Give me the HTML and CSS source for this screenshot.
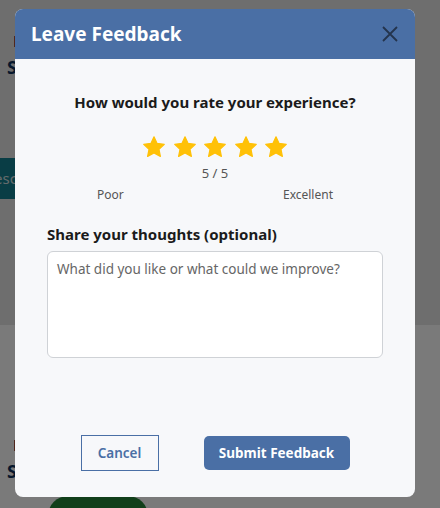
FILE: index.html
```html
<!DOCTYPE html>
<html>
<head>
<meta charset="utf-8">
<link rel="stylesheet" href="styles.css">
</head>
<body>
<div class="page">
  <div class="top-band">
    <div class="card-stub">
      <span class="mark"></span>
      <span class="stub-letter">S</span>
    </div>
    <div class="teal-bar">esc</div>
  </div>
  <div class="bottom-band">
    <div class="card-stub lower">
      <span class="mark"></span>
      <span class="stub-letter">S</span>
    </div>
    <div class="green-btn"></div>
  </div>
</div>
<div class="overlay">
  <div class="modal">
    <div class="modal-header">
      <h2 class="modal-title">Leave Feedback</h2>
      <svg class="close" width="16" height="16" viewBox="0 0 16 16"><path d="M1 1 L15 15 M15 1 L1 15" stroke="#24344d" stroke-width="1.8" fill="none"/></svg>
    </div>
    <div class="modal-body">
      <p class="question">How would you rate your experience?</p>
      <div class="stars">
        <svg class="star" viewBox="0 0 24 24"><path d="M12 1.8l3.1 6.6 7.2.9-5.3 5 1.4 7.1L12 17.9l-6.4 3.5 1.4-7.1-5.3-5 7.2-.9z" fill="#ffc107" stroke="#ffc107" stroke-width="1.2" stroke-linejoin="round"/></svg>
        <svg class="star" viewBox="0 0 24 24"><path d="M12 1.8l3.1 6.6 7.2.9-5.3 5 1.4 7.1L12 17.9l-6.4 3.5 1.4-7.1-5.3-5 7.2-.9z" fill="#ffc107" stroke="#ffc107" stroke-width="1.2" stroke-linejoin="round"/></svg>
        <svg class="star" viewBox="0 0 24 24"><path d="M12 1.8l3.1 6.6 7.2.9-5.3 5 1.4 7.1L12 17.9l-6.4 3.5 1.4-7.1-5.3-5 7.2-.9z" fill="#ffc107" stroke="#ffc107" stroke-width="1.2" stroke-linejoin="round"/></svg>
        <svg class="star" viewBox="0 0 24 24"><path d="M12 1.8l3.1 6.6 7.2.9-5.3 5 1.4 7.1L12 17.9l-6.4 3.5 1.4-7.1-5.3-5 7.2-.9z" fill="#ffc107" stroke="#ffc107" stroke-width="1.2" stroke-linejoin="round"/></svg>
        <svg class="star" viewBox="0 0 24 24"><path d="M12 1.8l3.1 6.6 7.2.9-5.3 5 1.4 7.1L12 17.9l-6.4 3.5 1.4-7.1-5.3-5 7.2-.9z" fill="#ffc107" stroke="#ffc107" stroke-width="1.2" stroke-linejoin="round"/></svg>
      </div>
      <div class="score">5 / 5</div>
      <div class="scale"><span>Poor</span><span>Excellent</span></div>
      <label class="thoughts-label" for="thoughts">Share your thoughts (optional)</label>
      <textarea id="thoughts" class="thoughts" placeholder="What did you like or what could we improve?"></textarea>
      <div class="actions">
        <button class="btn-cancel">Cancel</button>
        <button class="btn-submit">Submit Feedback</button>
      </div>
    </div>
  </div>
</div>
</body>
</html>
```

FILE: styles.css
```css
* { box-sizing: border-box; }
html, body { margin: 0; padding: 0; }
body {
  width: 440px;
  height: 508px;
  overflow: hidden;
  font-family: "Noto Sans", "Open Sans", sans-serif;
  background: #f2f2f2;
  position: relative;
}
.page {
  display: flex;
  flex-direction: column;
  height: 508px;
  overflow: hidden;
}
.top-band {
  height: 325px;
  flex-shrink: 0;
  background: #dcdcdc;
  padding-top: 36px;
  display: flex;
  flex-direction: column;
}
.bottom-band {
  flex: 1 0 auto;
  background: #f4f4f4;
  padding-top: 115px;
  display: flex;
  flex-direction: column;
}
.card-stub {
  display: flex;
  flex-direction: column;
  padding-left: 7px;
  gap: 10px;
}
.mark {
  width: 12px;
  height: 11px;
  background: #a04e3a;
  margin-left: 7px;
}
.stub-letter {
  font-weight: 700;
  font-size: 18px;
  color: #0d2e58;
  line-height: 20px;
}
.teal-bar {
  margin-top: 81px;
  width: 40px;
  height: 41px;
  background: #137b8a;
  color: #c9d6d8;
  font-size: 15px;
  line-height: 41px;
  text-indent: -6px;
}
.green-btn {
  margin-top: 15px;
  margin-left: 48px;
  width: 100px;
  height: 40px;
  border-radius: 20px;
  background: #237e35;
  flex-shrink: 0;
}
.overlay {
  position: absolute;
  inset: 0;
  background: rgba(0, 0, 0, 0.5);
}
.modal {
  position: absolute;
  left: 15px;
  top: 9px;
  width: 400px;
  height: 488px;
  background: #f7f8fa;
  border-radius: 8px;
  overflow: hidden;
  display: flex;
  flex-direction: column;
}
.modal-header {
  height: 50px;
  background: #4a6fa5;
  display: flex;
  align-items: center;
  justify-content: space-between;
  padding: 0 17px 0 16px;
}
.modal-title {
  margin: 0;
  color: #ffffff;
  font-size: 19px;
  font-weight: 700;
}
.close { display: block; }
.modal-body {
  flex: 1;
  display: flex;
  flex-direction: column;
  padding: 31px 32px 26px;
}
.question {
  margin: 0;
  text-align: center;
  font-size: 15px;
  font-weight: 700;
  color: #1b1b1b;
  line-height: 24px;
}
.stars {
  display: flex;
  justify-content: center;
  gap: 6.5px;
  margin-top: 21px;
}
.star { width: 24px; height: 24px; display: block; }
.score {
  text-align: center;
  font-size: 13px;
  color: #555;
  margin-top: 5px;
  line-height: 18px;
}
.scale {
  display: flex;
  justify-content: space-between;
  padding: 0 50px 0 50px;
  font-size: 12px;
  color: #555;
  margin-top: 4px;
  line-height: 18px;
}
.thoughts-label {
  margin-top: 19px;
  font-size: 15px;
  font-weight: 700;
  color: #1b1b1b;
  line-height: 22px;
}
.thoughts {
  margin-top: 6px;
  height: 107px;
  border: 1px solid #cfd2d6;
  border-radius: 6px;
  background: #ffffff;
  padding: 8px 9px;
  font-family: inherit;
  font-size: 13.5px;
  resize: none;
}
.thoughts::placeholder { color: #666; }
.actions {
  margin-top: auto;
  display: flex;
  justify-content: center;
  gap: 45px;
  align-items: center;
}
.btn-cancel {
  width: 78px;
  height: 36px;
  border: 1px solid #4a6fa5;
  background: transparent;
  color: #4a6fa5;
  font-family: inherit;
  font-size: 13.5px;
  font-weight: 600;
}
.btn-submit {
  width: 146px;
  height: 34px;
  border: none;
  border-radius: 5px;
  background: #4a6fa5;
  color: #ffffff;
  font-family: inherit;
  font-size: 13.5px;
  font-weight: 700;
}
```
